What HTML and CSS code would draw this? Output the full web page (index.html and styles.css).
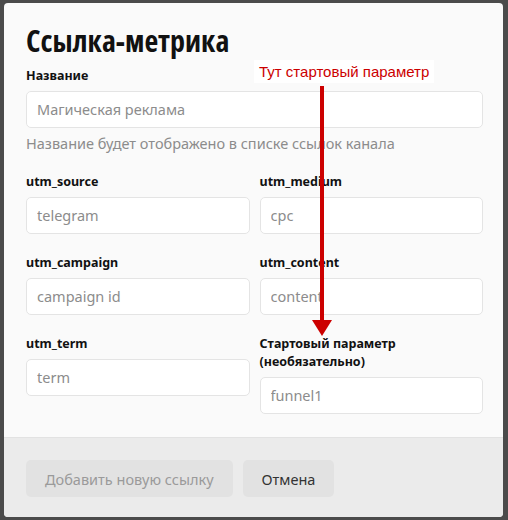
FILE: index.html
```html
<!DOCTYPE html>
<html lang="ru">
<head>
    <meta charset="UTF-8">
    <meta name="viewport" content="width=device-width, initial-scale=1.0">
    <title>Ссылка-метрика</title>
    <link rel="stylesheet" href="styles.css">
</head>
<body>
    <div class="modal">
        <div class="modal-body">
            <h1>Ссылка-метрика</h1>
            <div class="field">
                <label>Название</label>
                <input type="text" placeholder="Магическая реклама">
                <p class="hint">Название будет отображено в списке ссылок канала</p>
            </div>
            <div class="grid">
                <div class="field">
                    <label>utm_source</label>
                    <input type="text" placeholder="telegram">
                </div>
                <div class="field">
                    <label>utm_medium</label>
                    <input type="text" placeholder="cpc">
                </div>
                <div class="field">
                    <label>utm_campaign</label>
                    <input type="text" placeholder="campaign id">
                </div>
                <div class="field">
                    <label>utm_content</label>
                    <input type="text" placeholder="content">
                </div>
                <div class="field">
                    <label>utm_term</label>
                    <input type="text" placeholder="term">
                </div>
                <div class="field">
                    <label>Стартовый параметр<br>(необязательно)</label>
                    <input type="text" placeholder="funnel1">
                </div>
            </div>
        </div>
        <div class="modal-footer">
            <button class="add-btn" disabled>Добавить новую ссылку</button>
            <button class="cancel-btn">Отмена</button>
        </div>

        <div class="note">Тут стартовый параметр</div>
        <svg class="arrow" width="24" height="256" viewBox="0 0 24 256">
            <rect x="10" y="0" width="4" height="240" fill="#cc0000"/>
            <polygon points="2,234 22,234 12,250" fill="#cc0000"/>
        </svg>
    </div>
</body>
</html>
```

FILE: styles.css
```css
body {
    margin: 0;
    background: #4b4b4b;
    font-family: "Noto Sans", "Open Sans", sans-serif;
}
.modal {
    position: relative;
    width: 499px;
    margin: 3px 0 0 4px;
    background: #fafafa;
    border-radius: 4px;
    overflow: hidden;
}
.modal-body {
    padding: 21px 20px 23px 22px;
}
h1 {
    margin: 0 0 9px;
    font-family: "Open Sans", "Noto Sans", sans-serif;
    font-stretch: 87.5%;
    font-size: 30px;
    line-height: 34px;
    font-weight: 700;
    color: #111;
}
.field label {
    display: block;
    font-size: 12.5px;
    line-height: 18px;
    font-weight: 700;
    color: #111;
    margin-bottom: 6px;
}
.field input {
    display: block;
    box-sizing: border-box;
    width: 100%;
    height: 37px;
    padding: 0 10px 1px;
    border: 1px solid #e4e4e4;
    border-radius: 5px;
    background: #fff;
    font-family: inherit;
    font-size: 14.5px;
    color: #333;
}
.field input::placeholder {
    color: #8c8c8c;
}
.hint {
    margin: 5px 0 20px;
    font-size: 14.5px;
    line-height: 20px;
    color: #8c8c8c;
}
.grid {
    display: grid;
    grid-template-columns: 1fr 1fr;
    column-gap: 10px;
    row-gap: 20px;
}
.modal-footer {
    display: flex;
    gap: 10px;
    height: 80px;
    box-sizing: border-box;
    padding: 22px 22px 0;
    background: #ebebeb;
    border-top: 1px solid #e2e2e2;
}
button {
    height: 37px;
    padding: 0 19px;
    border: none;
    border-radius: 5px;
    background: #e2e2e2;
    font-family: inherit;
    font-size: 14.5px;
    color: #333;
    cursor: pointer;
}
.add-btn {
    color: #9a9a9a;
    cursor: default;
}
.note {
    position: absolute;
    left: 250px;
    top: 57px;
    padding: 2px 5px;
    background: #fff;
    font-family: "Liberation Sans", Arial, sans-serif;
    font-size: 15px;
    line-height: 19px;
    color: #cc0000;
}
.arrow {
    position: absolute;
    left: 306px;
    top: 83px;
}
```
